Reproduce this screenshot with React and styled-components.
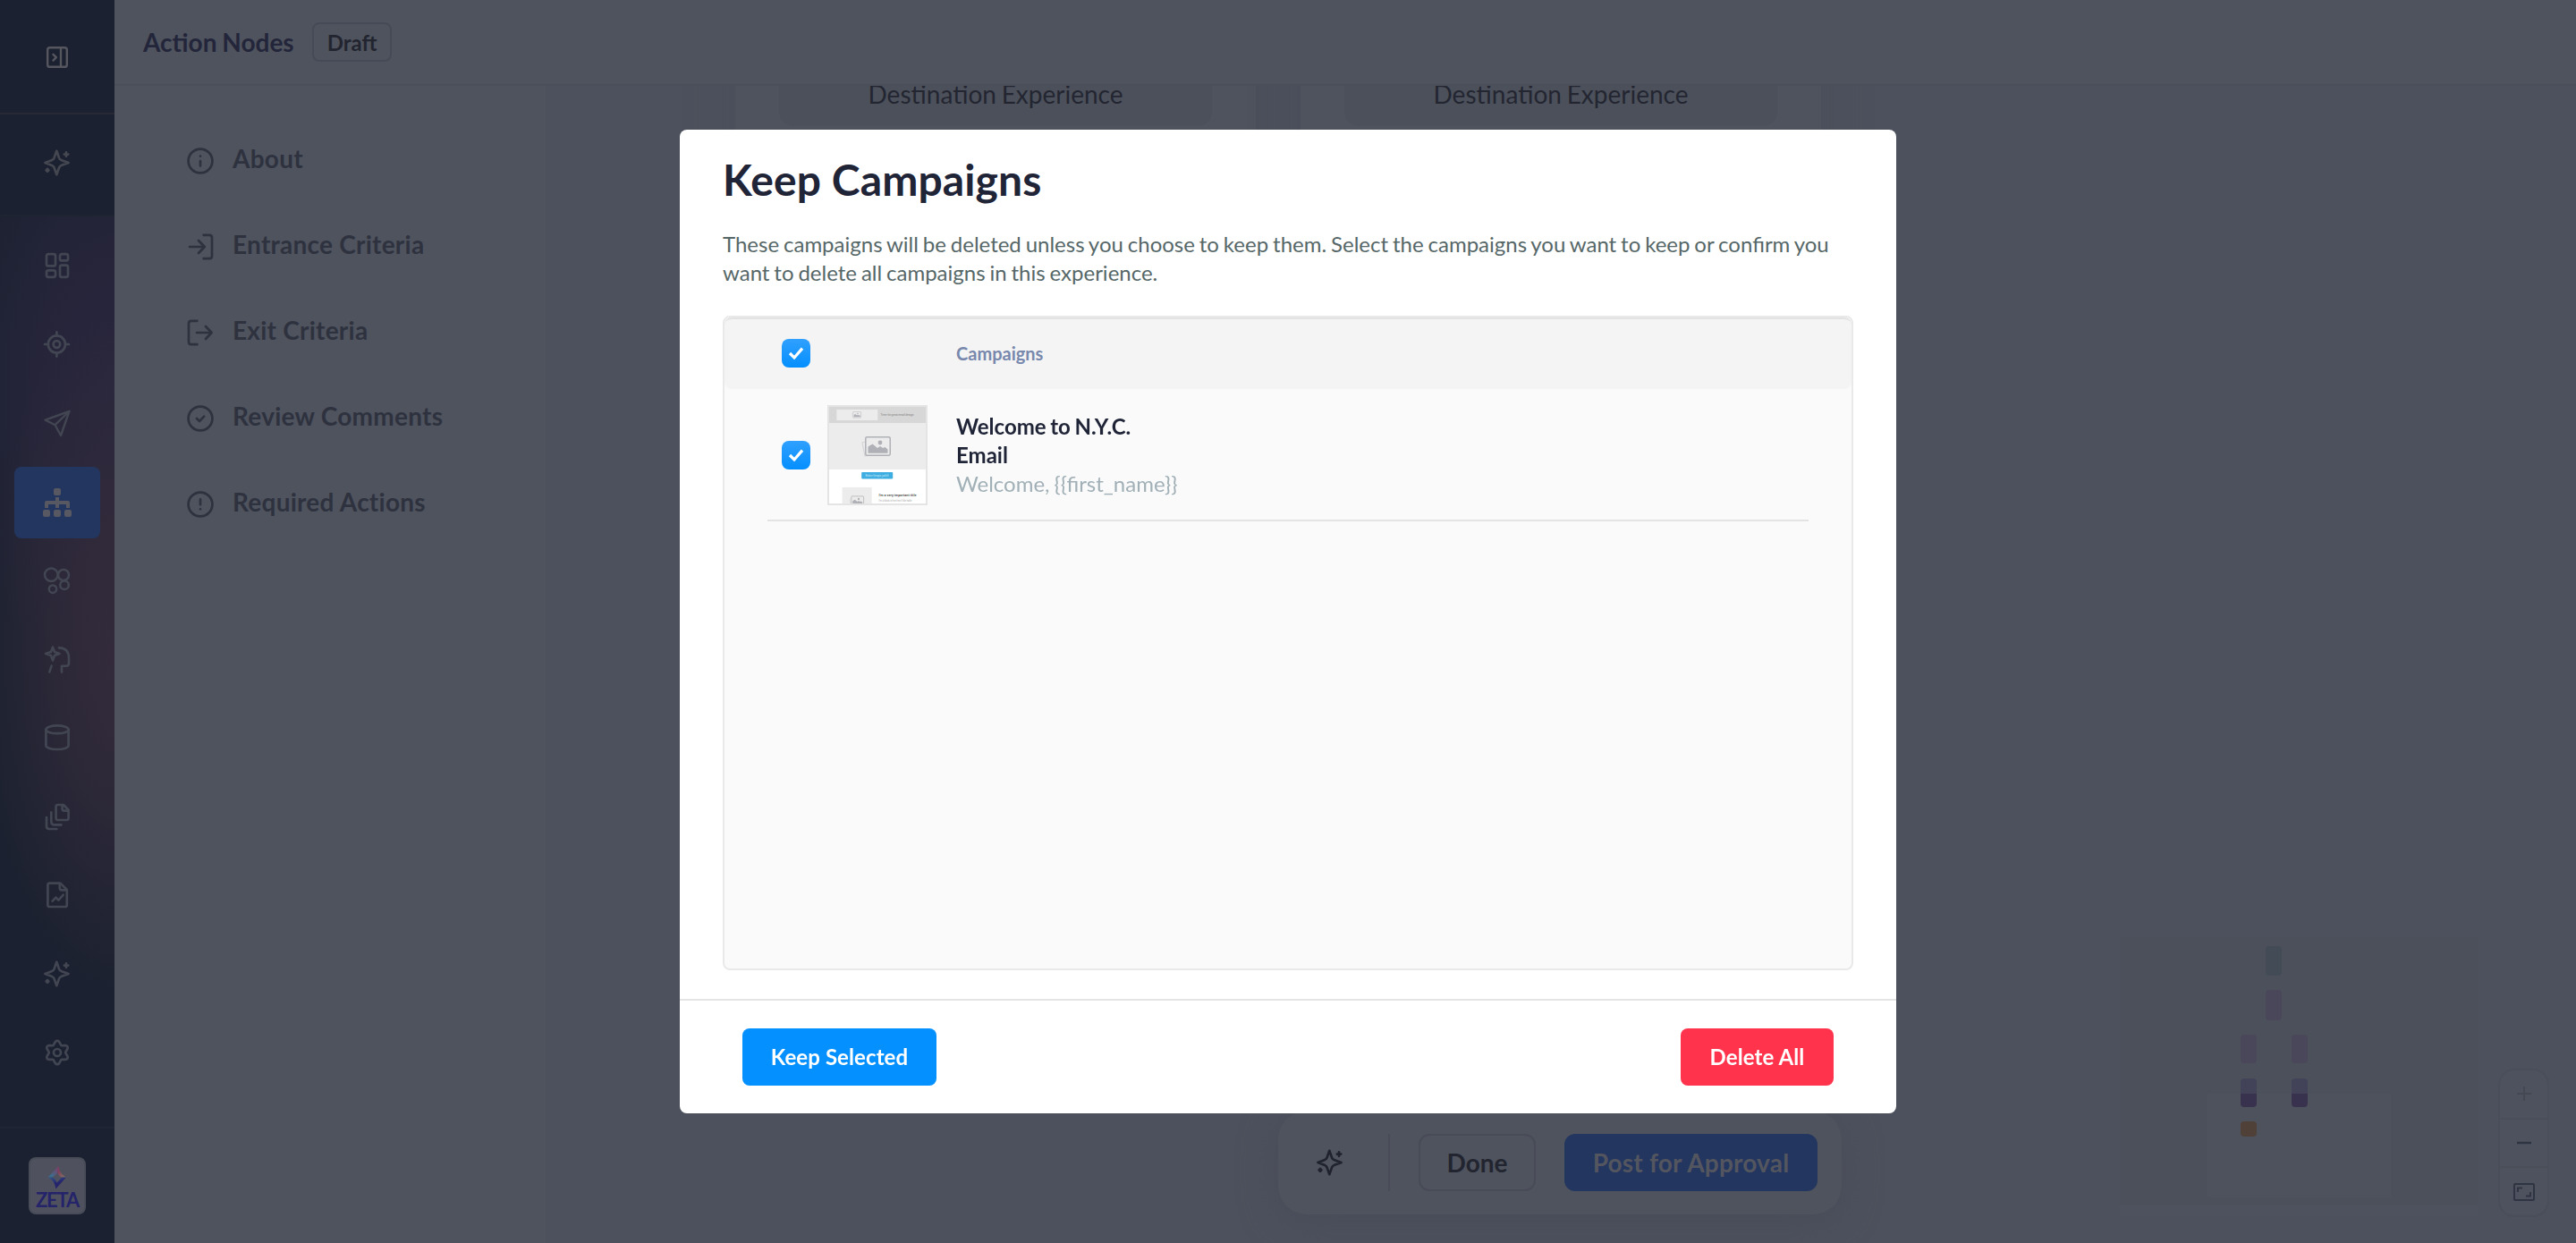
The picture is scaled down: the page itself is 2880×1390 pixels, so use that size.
import React from "react";
import styled, { createGlobalStyle, css } from "styled-components";

const GlobalStyles = createGlobalStyle`
  * {
    box-sizing: border-box;
  }
  html, body {
    margin: 0;
    padding: 0;
  }
  body {
    font-family: Lato, "Liberation Sans", sans-serif;
    background-color: #4d515d;
    overflow: hidden;
  }
  svg {
    display: block;
    flex-shrink: 0;
  }
`;

const LayoutStyles = styled.div`
  display: flex;
  width: 2880px;
  height: 1390px;
  overflow: hidden;
`;

/* ---------- left rail ---------- */

const RailStyles = styled.aside`
  display: flex;
  flex-direction: column;
  width: 128px;
  flex-shrink: 0;
  color: #424552;
  background-color: #1b2130;
`;

const RailSection = styled.div`
  display: flex;
  align-items: center;
  justify-content: center;
  height: ${(props) => props.$height}px;
  border-bottom: 2px solid ${(props) => props.$line};
  color: ${(props) => props.$color || "inherit"};
  & + & {
    padding-bottom: 4px;
  }
  &:first-child {
    padding-top: 2px;
  }
`;

const RailNav = styled.nav`
  flex: 1;
  padding-top: 11px;
  background: radial-gradient(
      ellipse 160px 380px at 134px 490px,
      #332b3b 0%,
      rgba(51, 43, 59, 0.75) 40%,
      rgba(51, 43, 59, 0) 100%
    ),
    radial-gradient(
      ellipse 190px 330px at 128px 190px,
      #29263d 0%,
      rgba(41, 38, 61, 0.7) 50%,
      rgba(41, 38, 61, 0) 100%
    );
`;

const RailItem = styled.div`
  display: flex;
  align-items: center;
  justify-content: center;
  width: 96px;
  height: 80px;
  margin: 4px auto 8px;
  border-radius: 8px;
  ${(props) =>
    props.$active &&
    css`
      margin-top: 9px;
      margin-bottom: 7px;
      background-color: #23365f;
      color: #575861;
    `}
`;

const RailFooter = styled.div`
  height: 130px;
  padding: 32px;
  border-top: 2px solid #1f2534;
`;

const LogoStyles = styled.div`
  display: flex;
  flex-direction: column;
  align-items: center;
  width: 64px;
  height: 64px;
  padding-top: 8px;
  border: 2px solid #484c58;
  border-radius: 8px;
  background-color: #4f525e;
  color: #25236a;
  font-size: 22px;
  font-weight: 700;
  line-height: 24px;
  letter-spacing: -1.2px;
`;

/* ---------- page ---------- */

const MainStyles = styled.div`
  display: flex;
  flex-direction: column;
  flex: 1;
`;

const HeaderStyles = styled.header`
  display: flex;
  align-items: center;
  height: 96px;
  padding: 0 32px 0;
  border-bottom: 2px solid #4b4f5a;
  background-color: #4f535e;
`;

const PageTitle = styled.h1`
  margin: 0 20px 0 0;
  color: #23263a;
  font-size: 28px;
  font-weight: 700;
  line-height: 40px;
  word-spacing: -1px;
`;

const StatusBadge = styled.span`
  display: flex;
  align-items: center;
  height: 44px;
  padding: 0 15px;
  border: 2px solid #464a56;
  border-radius: 8px;
  color: #22252f;
  font-size: 24px;
  font-weight: 700;
`;

const BodyStyles = styled.div`
  display: flex;
  flex: 1;
`;

const MenuStyles = styled.ul`
  width: 482px;
  margin: 0;
  padding: 36px 0 0 80px;
  list-style: none;
  background-color: #4f535e;
`;

const MenuItem = styled.li`
  display: flex;
  align-items: center;
  gap: 20px;
  height: 96px;
  color: #2e323f;
  font-size: 28px;
  font-weight: 700;
  letter-spacing: 0.25px;
  span {
    padding-bottom: 7px;
  }
`;

const CanvasStyles = styled.main`
  position: relative;
  flex: 1;
  overflow: hidden;
  background-color: #4d515d;
`;

const NodeCard = styled.div`
  position: absolute;
  top: -120px;
  left: ${(props) => props.$left}px;
  width: 582px;
  height: 260px;
  padding: 0 49px;
  background-color: #4f535e;
  box-shadow: 0 0 40px #4a4e5a;
`;

const NodeBody = styled.div`
  height: 165px;
  padding-top: 111px;
  border-radius: 16px;
  background-color: #4c505b;
  color: #232631;
  font-size: 28px;
  line-height: 36px;
  text-align: center;
  word-spacing: -1.4px;
`;

const ActionBar = styled.div`
  position: absolute;
  left: 819px;
  bottom: 32px;
  display: flex;
  align-items: center;
  width: 630px;
  height: 116px;
  padding-left: 42px;
  border-radius: 32px;
  background-color: #4f535e;
  color: #20232e;
  box-shadow: 0 8px 40px #484c58;
`;

const BarDivider = styled.div`
  flex-shrink: 0;
  width: 2px;
  height: 64px;
  margin: 0 32px 0 49px;
  background-color: #494c58;
`;

const BarButton = styled.button`
  flex-shrink: 0;
  width: ${(props) => (props.$primary ? 283 : 131)}px;
  height: 64px;
  margin: 0 32px 0 0;
  padding: 0;
  border: ${(props) => (props.$primary ? "none" : "2px solid #484b57")};
  border-radius: 12px;
  background-color: ${(props) => (props.$primary ? "#23365f" : "transparent")};
  color: ${(props) => (props.$primary ? "#53555f" : "#22252f")};
  font-family: inherit;
  font-size: 28px;
  font-weight: 700;
  letter-spacing: ${(props) => (props.$primary ? 0.2 : 0)}px;
  white-space: nowrap;
`;

const MiniMap = styled.div`
  position: absolute;
  right: 110px;
  bottom: 30px;
  width: 400px;
  height: 312px;
  border-bottom: 12px solid #4e525e;
  background-color: #4c505b;
`;

const MiniViewport = styled.div`
  position: absolute;
  left: 98px;
  top: 175px;
  width: 205px;
  height: 116px;
  background-color: #4e525d;
`;

const MiniNode = styled.div`
  position: absolute;
  left: ${(props) => props.$x}px;
  top: ${(props) => props.$y}px;
  width: 18px;
  height: ${(props) => props.$height}px;
  border-radius: 4px;
  background: ${(props) => props.$fill};
`;

const ZoomControls = styled.div`
  position: absolute;
  right: 30px;
  bottom: 29px;
  display: flex;
  flex-direction: column;
  width: 57px;
  height: 166px;
  border: 2px solid #4a4e5a;
  border-radius: 18px;
  background-color: #4e525e;
`;

const ZoomButton = styled.div`
  display: flex;
  flex: 1;
  align-items: center;
  justify-content: center;
  color: ${(props) => (props.$disabled ? "#444853" : "#2f3442")};
  & + & {
    border-top: 2px solid #4a4e59;
  }
`;

/* ---------- modal ---------- */

const ModalOverlay = styled.div`
  position: fixed;
  inset: 0;
  display: flex;
  justify-content: center;
  align-items: center;
`;

const ModalStyles = styled.section`
  display: flex;
  flex-direction: column;
  width: 1360px;
  height: 1100px;
  border-radius: 8px;
  background-color: #fff;
`;

const ModalContent = styled.div`
  display: flex;
  flex-direction: column;
  height: 972px;
  padding: 26px 48px 32px;
`;

const ModalTitle = styled.h2`
  margin: 0;
  color: #1f2437;
  font-size: 48px;
  font-weight: 700;
  line-height: 60px;
  letter-spacing: 0.1px;
`;

const ModalText = styled.p`
  margin: 26px 0 32px;
  color: #566768;
  font-size: 24px;
  line-height: 32px;
  word-spacing: -1.25px;
`;

const TableStyles = styled.div`
  flex: 1;
  border: 2px solid #e9e9e9;
  border-radius: 8px;
  background-color: #fafafa;
`;

const TableHeader = styled.div`
  display: flex;
  align-items: center;
  height: 80px;
  padding: 0 0 2px 64px;
  border-top: 2px solid #e2e2e2;
  border-radius: 8px;
  background-color: #f4f4f4;
  color: #7888ad;
  font-size: 20px;
  font-weight: 700;
  span {
    margin-left: 163px;
  }
`;

const TableRow = styled.div`
  display: flex;
  align-items: center;
  height: 148px;
  margin: 0 48px;
  padding: 2px 0 0 16px;
  border-bottom: 2px solid #e3e3e3;
`;

const CheckboxStyles = styled.div`
  display: flex;
  align-items: center;
  justify-content: center;
  width: 32px;
  height: 32px;
  border-radius: 8px;
  background: linear-gradient(#30a0ff, #048fff);
`;

const ThumbStyles = styled.div`
  width: 112px;
  height: 112px;
  margin: 0 32px 0 19px;
  border: 2px solid #e4e4e4;
  background-color: #fff;
`;

const CampaignInfo = styled.div`
  color: #1f2437;
  font-size: 24px;
  font-weight: 700;
  line-height: 32px;
  word-spacing: -1.2px;
  .subject {
    color: #a1b0b7;
    font-weight: 400;
  }
`;

const ModalFooter = styled.footer`
  display: flex;
  align-items: center;
  justify-content: space-between;
  height: 128px;
  padding: 0 70px;
  border-top: 2px solid #e5e5e5;
`;

const ModalButton = styled.button`
  width: ${(props) => (props.$danger ? 171 : 217)}px;
  height: 64px;
  padding: 0 0 1px;
  border: none;
  border-radius: 8px;
  background-color: ${(props) => (props.$danger ? "#ff334b" : "#0590ff")};
  color: #fff;
  font-family: inherit;
  font-size: 24px;
  font-weight: 700;
  letter-spacing: 0.1px;
`;

/* ---------- icons ---------- */

const Icon = ({ children, size = 32, stroke = 2.7 }) => (
  <svg
    width={size}
    height={size}
    viewBox="0 0 32 32"
    fill="none"
    stroke="currentColor"
    strokeWidth={stroke}
    strokeLinecap="round"
    strokeLinejoin="round"
  >
    {children}
  </svg>
);

const SparkleIcon = () => (
  <Icon>
    <path d="M15.3 2.8 18 10.4Q18.8 12.5 21 13.3L28.6 16 21 18.7Q18.8 19.5 18 21.6L15.3 29.2 12.6 21.6Q11.8 19.5 9.6 18.7L2.4 16 9.6 13.3Q11.8 12.5 12.6 10.4Z" />
    <path d="M26 4.4v4.4M23.8 6.6h4.4" />
    <path d="M5 23 6.4 24.4 5 25.8 3.6 24.4Z" />
  </Icon>
);

const PanelIcon = () => (
  <Icon stroke={2.4}>
    <rect x="5.2" y="5.2" width="21.6" height="21.6" rx="2.4" />
    <path d="M20 5.2v21.6M11.5 12.8l3.4 3.4-3.4 3.4" />
  </Icon>
);

const DashboardIcon = () => (
  <Icon>
    <rect x="4" y="3.2" width="10" height="13.2" rx="2" />
    <rect x="19" y="3.2" width="9" height="7.2" rx="2" />
    <rect x="4" y="21.4" width="10" height="7.4" rx="2" />
    <rect x="19" y="15.6" width="9" height="13.2" rx="2" />
  </Icon>
);

const TargetIcon = () => (
  <Icon>
    <circle cx="15.4" cy="16" r="9.6" />
    <circle cx="15.4" cy="16" r="3.8" />
    <path d="M15.4 2.4v4M15.4 25.6v4M2 16h4M25 16h4" />
  </Icon>
);

const SendIcon = () => (
  <Icon stroke={2.4}>
    <path d="M2.6 12.6 29.4 3 20 30 13.6 18.2Z" />
    <path d="M29.4 3 13.6 18.2" />
  </Icon>
);

const SitemapIcon = () => (
  <svg width="32" height="32" viewBox="0 0 32 32" fill="currentColor">
    <rect x="12" y="0" width="8" height="8" rx="2" />
    <rect x="0" y="24" width="8" height="8" rx="2" />
    <rect x="12" y="24" width="8" height="8" rx="2" />
    <rect x="24" y="24" width="8" height="8" rx="2" />
    <path d="M14 10h4v4h10q2 0 2 2v6h-4v-4h-8v4h-4v-4H6v4H2v-6q0-2 2-2h10z" />
  </svg>
);

const CirclesIcon = () => (
  <Icon stroke={2.5}>
    <circle cx="9.3" cy="9.7" r="7.3" />
    <circle cx="23" cy="10" r="6" />
    <circle cx="24" cy="21.3" r="4.8" />
    <circle cx="11" cy="25.7" r="4.2" />
  </Icon>
);

const PersonaIcon = () => (
  <Icon stroke={2.6}>
    <path d="M11 2.6 13 8 18.6 10 13 12 11 17.6 9 12 3 10 9 8Z" />
    <path d="M18 3.4q11 .4 11 11.6v5.5q0 3.2-3.2 3.2H21V30.6M9.6 23.6 7.4 30.4" />
  </Icon>
);

const DatabaseIcon = () => (
  <Icon>
    <ellipse cx="16" cy="6.8" rx="12.6" ry="4.4" />
    <path d="M3.4 6.8v18c0 2 5 4.2 12.6 4.2s12.6-2.2 12.6-4.2v-18" />
  </Icon>
);

const FilesIcon = () => (
  <Icon>
    <path d="M16.6 3H23l5.6 5.8v9q0 2.2-2.2 2.2h-9.6q-2.2 0-2.2-2.2V5q0-2 2-2Z" />
    <path d="M21.6 3.4v4.2q0 2 2 2h4.4" />
    <path d="M9.3 11.4v10q0 4 4 4h7.2M4 17v10q0 3 3 3h8.4" />
  </Icon>
);

const ReportIcon = () => (
  <Icon>
    <path d="M7.5 2.6H19.5L26.8 10v17q0 2-2 2H7.4q-2 0-2-2V4.6q0-2 2.1-2Z" />
    <path d="M18.8 3.2V8q0 2.4 2.4 2.4h5M10.6 22.6l3.8-4 3 3 5.2-5.8" />
  </Icon>
);

// six lobed gear outline
const gearPath = Array.from({ length: 72 }, (_, i) => {
  const angle = (i / 72) * Math.PI * 2;
  const radius = 11.2 - 2 * Math.cos(6 * angle);
  const x = 16 + radius * Math.cos(angle);
  const y = 16 + radius * Math.sin(angle);
  return `${i ? "L" : "M"}${x.toFixed(2)} ${y.toFixed(2)}`;
}).join("");

const GearIcon = () => (
  <Icon>
    <path d={`${gearPath}Z`} />
    <circle cx="16" cy="16" r="4" />
  </Icon>
);

const CheckIcon = () => (
  <svg width="18" height="16" viewBox="0 0 18 16" fill="none">
    <path d="M2 8l5 5L16 2.6" stroke="#fff" strokeWidth="3.2" />
  </svg>
);

const ZetaMark = () => (
  <svg width="22" height="26" viewBox="0 0 22 26">
    <defs>
      <linearGradient id="zetaCool" x1="1" y1="0" x2="0" y2="1">
        <stop offset="0.1" stopColor="#7c3f6c" />
        <stop offset="0.8" stopColor="#3b6f8c" />
      </linearGradient>
      <linearGradient id="zetaWarm" x1="0" y1="0" x2="1" y2="1">
        <stop offset="0.3" stopColor="#7c3f5c" />
        <stop offset="0.9" stopColor="#86705f" />
      </linearGradient>
      <linearGradient id="zetaDeep" x1="0" y1="0" x2="0.5" y2="1">
        <stop offset="0" stopColor="#35598a" />
        <stop offset="0.6" stopColor="#25246c" />
      </linearGradient>
    </defs>
    <path d="M12.5 0 0.8 12.5H5.8L11.2 7.4Z" fill="url(#zetaCool)" />
    <path d="M12.5 0Q13.4 8.4 21 12.7H16.2Q12.6 11 11 7.2Z" fill="url(#zetaWarm)" />
    <path d="M0.8 12.4Q8.6 16.6 9.4 25.6L21 12.6H16.2L10.6 18.4Q9.6 14.8 5.8 12.4Z" fill="url(#zetaDeep)" />
  </svg>
);

const Picture = () => (
  <>
    <path d="M-14-5-17-4-14 11 0 8" fill="none" stroke="#d6d6d8" strokeWidth="1.2" />
    <rect x="-13.2" y="-10.2" width="27.4" height="20.4" rx="1.4" fill="#ececec" stroke="#b0b1b6" strokeWidth="1.5" />
    <circle cx="3" cy="-4" r="2.4" fill="#b0b1b6" />
    <path d="M-10.5 7.8V.5L-5.5-2.5 0 2 3 0 6 2 8.5 1 11.5 3.5V7.8Z" fill="#b0b1b6" />
  </>
);

const EmailPreview = () => (
  <svg width="108" height="108" viewBox="0 0 108 108" fontFamily="Roboto, sans-serif" wordSpacing="0">
    <rect width="108" height="18" fill="#d7d7d7" />
    <rect x="8.3" y="3" width="46" height="12" fill="#ececec" />
    <g transform="translate(31 8.8) scale(0.32)">
      <Picture />
    </g>
    <text x="57.5" y="9.9" fontSize="3.4" fill="#888" textLength="37">
      Time for great email design
    </text>
    <rect y="18" width="108" height="52" fill="#ececec" />
    <g transform="translate(54 44)">
      <Picture />
    </g>
    <rect x="36.2" y="73" width="35" height="7.4" rx="0.8" fill="#3eade1" />
    <text x="40.5" y="77.7" fontSize="2.8" fill="#c9e8f7" textLength="26">
      {"Button {{magic_path}}"}
    </text>
    <rect x="14.6" y="90" width="33" height="18" fill="#ececec" />
    <g transform="translate(31.5 105) scale(0.5)">
      <Picture />
    </g>
    <text x="55.5" y="99.6" fontSize="3.8" fontWeight="700" fill="#555" textLength="42">
      I'm a very important title
    </text>
    <text x="55.5" y="106" fontSize="2.7" fill="#aaa" textLength="37">
      I'm a block of text text I like table
    </text>
  </svg>
);

/* ---------- data ---------- */

const railIcons = [
  DashboardIcon,
  TargetIcon,
  SendIcon,
  SitemapIcon,
  CirclesIcon,
  PersonaIcon,
  DatabaseIcon,
  FilesIcon,
  ReportIcon,
  SparkleIcon,
  GearIcon,
];

const menuItems = [
  {
    label: "About",
    icon: (
      <>
        <circle cx="16" cy="16" r="13.4" />
        <path d="M16 21.4V16M16 10.7h.01" />
      </>
    ),
  },
  {
    label: "Entrance Criteria",
    icon: <path d="M4 16H20.5M14 9l6.8 7-6.8 7M19.6 2.8H26q3 0 3 3V26.2q0 3-3 3H19.6" />,
  },
  {
    label: "Exit Criteria",
    icon: <path d="M12 16H28.4M22 9l6.6 7-6.6 7M12.4 2.8H6q-3 0-3 3V26.2q0 3 3 3H12.4" />,
  },
  {
    label: "Review Comments",
    icon: (
      <>
        <circle cx="16" cy="16" r="13.4" />
        <path d="M12 16l3 3 5.2-5.4" />
      </>
    ),
  },
  {
    label: "Required Actions",
    icon: (
      <>
        <circle cx="16" cy="16" r="13.4" />
        <path d="M16 10.3V16.3M16 21.3h.01" />
      </>
    ),
  },
];

const split = "linear-gradient(#424359 54%, #39324f 54%)";

const miniNodes = [
  { x: 163, y: 10, height: 33, fill: "#434c56" },
  { x: 163, y: 59, height: 34, fill: "#4a475a" },
  { x: 135, y: 109, height: 32, fill: "#4a475a" },
  { x: 192, y: 109, height: 32, fill: "#4a475a" },
  { x: 135, y: 158, height: 32, fill: split },
  { x: 192, y: 158, height: 32, fill: split },
  { x: 135, y: 206, height: 17, fill: "#4f4038" },
];

/* ---------- components ---------- */

const Rail = () => {
  return (
    <RailStyles>
      <RailSection $height={128} $line="#272934" $color="#55565e">
        <PanelIcon />
      </RailSection>
      <RailSection $height={114} $line="#1f2433" $color="#444750">
        <SparkleIcon />
      </RailSection>
      <RailNav>
        {railIcons.map((NavIcon, index) => (
          <RailItem key={index} $active={NavIcon === SitemapIcon}>
            <NavIcon />
          </RailItem>
        ))}
      </RailNav>
      <RailFooter>
        <LogoStyles>
          <ZetaMark />
          <span>ZETA</span>
        </LogoStyles>
      </RailFooter>
    </RailStyles>
  );
};

const Canvas = () => {
  return (
    <CanvasStyles>
      <NodeCard $left={212}>
        <NodeBody>Destination Experience</NodeBody>
      </NodeCard>
      <NodeCard $left={844}>
        <NodeBody>Destination Experience</NodeBody>
      </NodeCard>
      <ActionBar>
        <SparkleIcon />
        <BarDivider />
        <BarButton>Done</BarButton>
        <BarButton $primary>Post for Approval</BarButton>
      </ActionBar>
      <MiniMap>
        <MiniViewport />
        {miniNodes.map((node, index) => (
          <MiniNode key={index} $x={node.x} $y={node.y} $height={node.height} $fill={node.fill} />
        ))}
      </MiniMap>
      <ZoomControls>
        <ZoomButton $disabled>
          <svg width="16" height="16" viewBox="0 0 16 16" stroke="currentColor" strokeWidth="2">
            <path d="M8 0v16M0 8h16" />
          </svg>
        </ZoomButton>
        <ZoomButton>
          <svg width="16" height="4" viewBox="0 0 16 4" stroke="currentColor" strokeWidth="2.4">
            <path d="M0 2h16" />
          </svg>
        </ZoomButton>
        <ZoomButton>
          <svg width="24" height="20" viewBox="0 0 24 20" fill="none" stroke="currentColor" strokeWidth="2">
            <rect x="1" y="1" width="22" height="18" rx="1" />
            <path d="M5 10V5.5h5M19 10v4.5h-5" />
          </svg>
        </ZoomButton>
      </ZoomControls>
    </CanvasStyles>
  );
};

const Checkbox = () => (
  <CheckboxStyles>
    <CheckIcon />
  </CheckboxStyles>
);

const KeepCampaignsModal = () => {
  return (
    <ModalOverlay>
      <ModalStyles>
        <ModalContent>
          <ModalTitle>Keep Campaigns</ModalTitle>
          <ModalText>
            These campaigns will be deleted unless you choose to keep them. Select the campaigns you
            want to keep or confirm you
            <br />
            want to delete all campaigns in this experience.
          </ModalText>
          <TableStyles>
            <TableHeader>
              <Checkbox />
              <span>Campaigns</span>
            </TableHeader>
            <TableRow>
              <Checkbox />
              <ThumbStyles>
                <EmailPreview />
              </ThumbStyles>
              <CampaignInfo>
                <div>Welcome to N.Y.C.</div>
                <div>Email</div>
                <div className="subject">{"Welcome, {{first_name}}"}</div>
              </CampaignInfo>
            </TableRow>
          </TableStyles>
        </ModalContent>
        <ModalFooter>
          <ModalButton>Keep Selected</ModalButton>
          <ModalButton $danger>Delete All</ModalButton>
        </ModalFooter>
      </ModalStyles>
    </ModalOverlay>
  );
};

const App = () => {
  return (
    <LayoutStyles>
      <GlobalStyles />
      <Rail />
      <MainStyles>
        <HeaderStyles>
          <PageTitle>Action Nodes</PageTitle>
          <StatusBadge>Draft</StatusBadge>
        </HeaderStyles>
        <BodyStyles>
          <MenuStyles>
            {menuItems.map((item) => (
              <MenuItem key={item.label}>
                <Icon>{item.icon}</Icon>
                <span>{item.label}</span>
              </MenuItem>
            ))}
          </MenuStyles>
          <Canvas />
        </BodyStyles>
      </MainStyles>
      <KeepCampaignsModal />
    </LayoutStyles>
  );
};

export default App;
